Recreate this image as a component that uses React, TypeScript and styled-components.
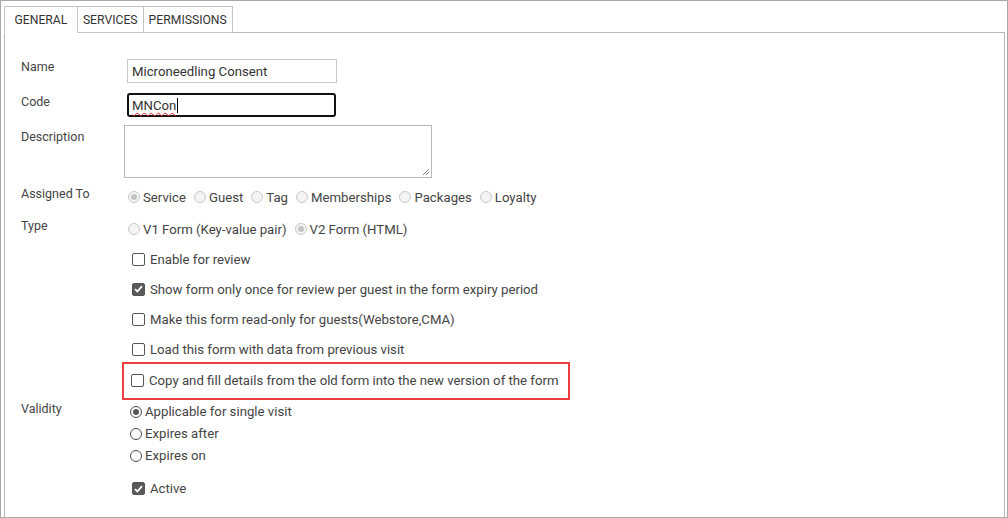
import React from 'react'
import styled, { createGlobalStyle } from 'styled-components'

const GlobalStyle = createGlobalStyle`
  html, body {
    margin: 0;
    padding: 0;
    background: #fff;
  }
  body {
    font-family: Roboto, "Liberation Sans", sans-serif;
    color: #333;
  }
`

const Frame = styled.div`
  box-sizing: border-box;
  width: 1008px;
  height: 518px;
  border: 1px solid #a8a8a8;
  padding: 5px 2px 0 3px;
  display: flex;
  flex-direction: column;
  overflow: hidden;
`

const TabBar = styled.div`
  display: flex;
  height: 26px;
`

const Tab = styled.div<{ $active?: boolean }>`
  box-sizing: border-box;
  height: 27px;
  padding: 0 ${(p) => (p.$active ? '9.5px' : '5px')};
  border: 1px solid #c4c4c4;
  border-left-width: ${(p) => (p.$active ? '1px' : '0')};
  border-bottom: ${(p) => (p.$active ? '1px solid #fff' : '1px solid #c4c4c4')};
  background: #fff;
  font-size: 12.2px;
  color: #333;
  display: flex;
  align-items: center;
  position: relative;
  z-index: 1;
`

const Panel = styled.div`
  flex: 1;
  border: 1px solid #b8b8b8;
  border-bottom: none;
  padding: 26px 0 0 16px;
`

const Row = styled.div<{ $gap?: number; $lift?: number }>`
  display: grid;
  grid-template-columns: 103px 1fr;
  align-items: start;
  margin-top: ${(p) => p.$lift ?? 0}px;
  margin-bottom: ${(p) => p.$gap ?? 0}px;
`

const Label = styled.div<{ $top?: number }>`
  font-size: 12.5px;
  color: #444;
  padding-top: ${(p) => p.$top ?? 0}px;
  line-height: 16px;
`

const TextInput = styled.div`
  box-sizing: border-box;
  width: 210px;
  height: 24px;
  margin-left: 3px;
  border: 1px solid #c8c8c8;
  padding: 0 4px;
  font-size: 13.2px;
  color: #333;
  display: flex;
  align-items: center;
`

const FocusedInput = styled(TextInput)`
  border: 2px solid #111;
  border-radius: 3px;
  padding: 0 3px;
  width: 209px;
`

const Misspelt = styled.span`
  text-decoration: underline wavy #e02020;
  text-decoration-thickness: 1px;
  text-underline-offset: 2px;
`

const Caret = styled.span`
  display: inline-block;
  width: 1px;
  height: 15px;
  background: #000;
  margin-left: 1px;
`

const TextArea = styled.div`
  box-sizing: border-box;
  width: 308px;
  height: 53px;
  border: 1px solid #b8b8b8;
  position: relative;
`

const Grip = styled.svg`
  position: absolute;
  right: 1px;
  bottom: 1px;
`

const Inline = styled.div`
  display: flex;
  align-items: center;
  height: 20px;
  margin-top: 1px;
  padding-left: 4px;
  font-size: 13.2px;
  color: #444;
`

const RadioItem = styled.label`
  display: inline-flex;
  align-items: center;
  margin-right: 8px;
`

const RadioDot = styled.span<{ $checked?: boolean; $disabled?: boolean }>`
  box-sizing: border-box;
  width: 12px;
  height: 12px;
  border-radius: 50%;
  border: 1px solid ${(p) => (p.$disabled ? '#c9c9c9' : '#4a4a4a')};
  background: ${(p) => (p.$disabled ? '#f4f4f4' : '#fff')};
  margin-right: 3px;
  display: inline-flex;
  align-items: center;
  justify-content: center;
  &::after {
    content: '';
    display: ${(p) => (p.$checked ? 'block' : 'none')};
    width: 6px;
    height: 6px;
    border-radius: 50%;
    background: ${(p) => (p.$disabled ? '#c4c4c4' : '#555')};
  }
`

const Stack = styled.div`
  display: flex;
  flex-direction: column;
`

const CheckRow = styled.div<{ $gap?: number; $flush?: boolean }>`
  display: flex;
  align-items: center;
  height: 20px;
  padding-left: ${(p) => (p.$flush ? 0 : 8)}px;
  margin-bottom: ${(p) => p.$gap ?? 10.2}px;
  font-size: 13.2px;
  color: #444;
`

const Highlight = styled.div`
  align-self: flex-start;
  margin-left: -2px;
  border: 2.5px solid #ec3d3f;
  padding: 7px 10px 7px 7px;
  margin-top: -8px;
`

const Box = styled.span<{ $checked?: boolean }>`
  box-sizing: border-box;
  width: 13px;
  height: 13px;
  border: 1px solid #555;
  border-radius: 2px;
  background: ${(p) => (p.$checked ? '#5a5a5a' : '#fff')};
  margin-right: 5px;
  display: inline-flex;
  align-items: center;
  justify-content: center;
`

const ValidityRow = styled.div`
  display: flex;
  align-items: center;
  height: 22px;
  padding-left: 6px;
  font-size: 13.2px;
  color: #444;
`

const ActiveRow = styled(CheckRow)`
  margin-top: 12px;
`

const Check = ({ checked }: { checked?: boolean }) => (
  <Box $checked={checked}>
    {checked && (
      <svg width="9" height="8" viewBox="0 0 9 8">
        <path d="M1 4.2 L3.4 6.5 L8 1.2" stroke="#fff" strokeWidth="1.8" fill="none" />
      </svg>
    )}
  </Box>
)

const Radio = ({
  label,
  checked,
  disabled,
}: {
  label: string
  checked?: boolean
  disabled?: boolean
}) => (
  <RadioItem>
    <RadioDot $checked={checked} $disabled={disabled} />
    {label}
  </RadioItem>
)

const App: React.FC = () => {
  return (
    <>
      <GlobalStyle />
      <Frame>
        <TabBar>
          <Tab $active>GENERAL</Tab>
          <Tab>SERVICES</Tab>
          <Tab>PERMISSIONS</Tab>
        </TabBar>
        <Panel>
          <Row $gap={10}>
            <Label $top={0}>Name</Label>
            <TextInput>Microneedling Consent</TextInput>
          </Row>
          <Row $gap={8}>
            <Label $top={1}>Code</Label>
            <FocusedInput>
              <Misspelt>MNCon</Misspelt>
              <Caret />
            </FocusedInput>
          </Row>
          <Row $gap={8}>
            <Label $top={4}>Description</Label>
            <TextArea>
              <Grip width="8" height="8" viewBox="0 0 8 8">
                <path d="M7 1 L1 7 M7 4 L4 7" stroke="#777" strokeWidth="0.9" />
              </Grip>
            </TextArea>
          </Row>
          <Row $gap={11}>
            <Label $top={0}>Assigned To</Label>
            <Inline>
              <Radio label="Service" checked disabled />
              <Radio label="Guest" disabled />
              <Radio label="Tag" disabled />
              <Radio label="Memberships" disabled />
              <Radio label="Packages" disabled />
              <Radio label="Loyalty" disabled />
            </Inline>
          </Row>
          <Row $gap={10}>
            <Label $top={0}>Type</Label>
            <Inline>
              <Radio label="V1 Form (Key-value pair)" disabled />
              <Radio label="V2 Form (HTML)" checked disabled />
            </Inline>
          </Row>
          <Row>
            <div />
            <Stack>
              <CheckRow>
                <Check />
                Enable for review
              </CheckRow>
              <CheckRow>
                <Check checked />
                Show form only once for review per guest in the form expiry period
              </CheckRow>
              <CheckRow>
                <Check />
                Make this form read-only for guests(Webstore,CMA)
              </CheckRow>
              <CheckRow>
                <Check />
                Load this form with data from previous visit
              </CheckRow>
              <Highlight>
                <CheckRow $gap={0} $flush>
                  <Check />
                  Copy and fill details from the old form into the new version of the form
                </CheckRow>
              </Highlight>
            </Stack>
          </Row>
          <Row $lift={1}>
            <Label $top={0}>Validity</Label>
            <Stack>
              <ValidityRow>
                <RadioDot $checked />
                Applicable for single visit
              </ValidityRow>
              <ValidityRow>
                <RadioDot />
                Expires after
              </ValidityRow>
              <ValidityRow>
                <RadioDot />
                Expires on
              </ValidityRow>
              <ActiveRow>
                <Check checked />
                Active
              </ActiveRow>
            </Stack>
          </Row>
        </Panel>
      </Frame>
    </>
  )
}

export default App
